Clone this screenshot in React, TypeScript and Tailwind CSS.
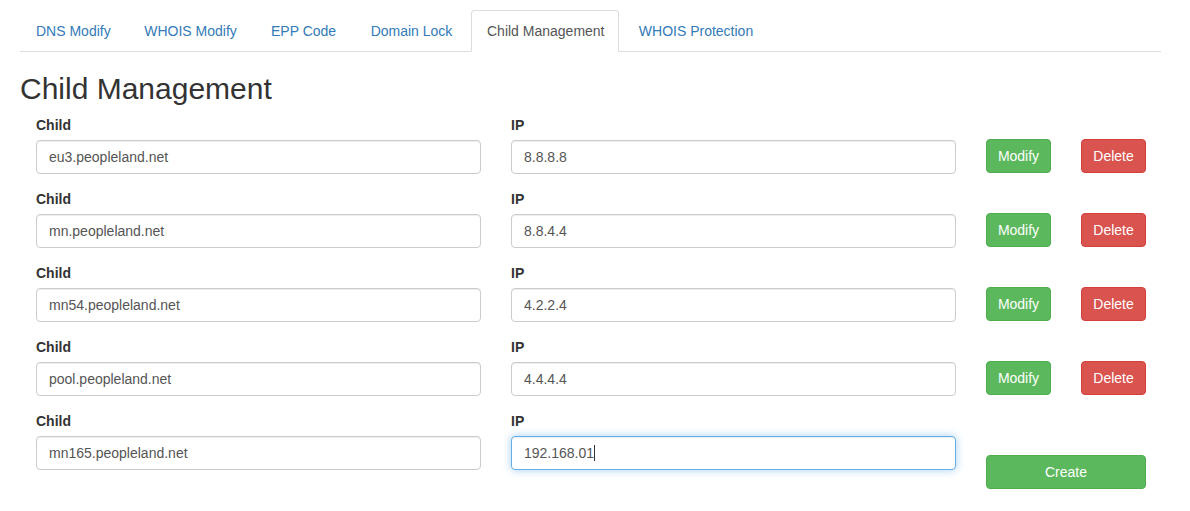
import React from "react";

const tabs = [
  { label: "DNS Modify", w: "w-[106px]" },
  { label: "WHOIS Modify", w: "w-[125px]" },
  { label: "EPP Code", w: "w-[97px]" },
  { label: "Domain Lock", w: "w-[115px]" },
  { label: "Child Management", w: "w-[148px]", active: true },
  { label: "WHOIS Protection", w: "w-[150px]" },
];

const rows = [
  { child: "eu3.peopleland.net", ip: "8.8.8.8" },
  { child: "mn.peopleland.net", ip: "8.8.4.4" },
  { child: "mn54.peopleland.net", ip: "4.2.2.4" },
  { child: "pool.peopleland.net", ip: "4.4.4.4" },
];

const inputCls =
  "block w-full h-[34px] px-[12px] py-[6px] text-[14px] leading-[20px] text-[#555] bg-white border border-[#ccc] rounded-[4px] shadow-[inset_0_1px_1px_rgba(0,0,0,0.075)] outline-none";

function Label({ children }: { children: React.ReactNode }) {
  return <div className="text-[14px] leading-[20px] font-bold text-[#333] mb-[5px]">{children}</div>;
}

export default function App() {
  return (
    <div
      className="bg-white min-h-[511px] pt-[10px] pl-[20px]"
      style={{ fontFamily: '"Liberation Sans", Arial, Helvetica, sans-serif' }}
    >
      <div className="w-[1141px]">
        <ul className="flex border-b border-[#ddd]">
          {tabs.map((t) => (
            <li key={t.label} className={`-mb-px mr-[2px] ${t.w}`}>
              <div
                className={
                  "h-[42px] px-[15px] py-[10px] text-[14px] leading-[20px] text-center whitespace-nowrap border rounded-t-[4px] " +
                  (t.active
                    ? "border-[#ddd] border-b-transparent bg-white text-[#555]"
                    : "border-transparent text-[#337ab7]")
                }
              >
                {t.label}
              </div>
            </li>
          ))}
        </ul>
        <h2 className="mt-[20px] mb-[10px] text-[30px] leading-[33px] font-medium text-[#333]">
          Child Management
        </h2>
        <div className="ml-[16px]">
          {rows.map((r) => (
            <div key={r.child} className="grid grid-cols-[445px_445px_160px] gap-x-[30px] mb-[15px]">
              <div>
                <Label>Child</Label>
                <input className={inputCls} defaultValue={r.child} readOnly />
              </div>
              <div>
                <Label>IP</Label>
                <input className={inputCls} defaultValue={r.ip} readOnly />
              </div>
              <div className="pt-[24px] flex justify-between">
                <button className="w-[65px] h-[34px] text-[14px] leading-[20px] text-white bg-[#5cb85c] border border-[#4cae4c] rounded-[4px]">
                  Modify
                </button>
                <button className="w-[65px] h-[34px] text-[14px] leading-[20px] text-white bg-[#d9534f] border border-[#d43f3a] rounded-[4px]">
                  Delete
                </button>
              </div>
            </div>
          ))}
          <div className="grid grid-cols-[445px_445px_160px] gap-x-[30px]">
            <div>
              <Label>Child</Label>
              <input className={inputCls} defaultValue="mn165.peopleland.net" readOnly />
            </div>
            <div>
              <Label>IP</Label>
              <div className="flex items-center w-full h-[34px] px-[12px] text-[14px] leading-[20px] text-[#555] bg-white border border-[#66afe9] rounded-[4px] shadow-[inset_0_1px_1px_rgba(0,0,0,0.075),0_0_8px_rgba(102,175,233,0.6)]">
                <span>192.168.01</span>
                <span className="inline-block w-px h-[16px] bg-[#333]" />
              </div>
            </div>
            <div className="pt-[44px]">
              <button className="w-[160px] h-[34px] text-[14px] leading-[20px] text-white bg-[#5cb85c] border border-[#4cae4c] rounded-[4px]">
                Create
              </button>
            </div>
          </div>
        </div>
      </div>
    </div>
  );
}
